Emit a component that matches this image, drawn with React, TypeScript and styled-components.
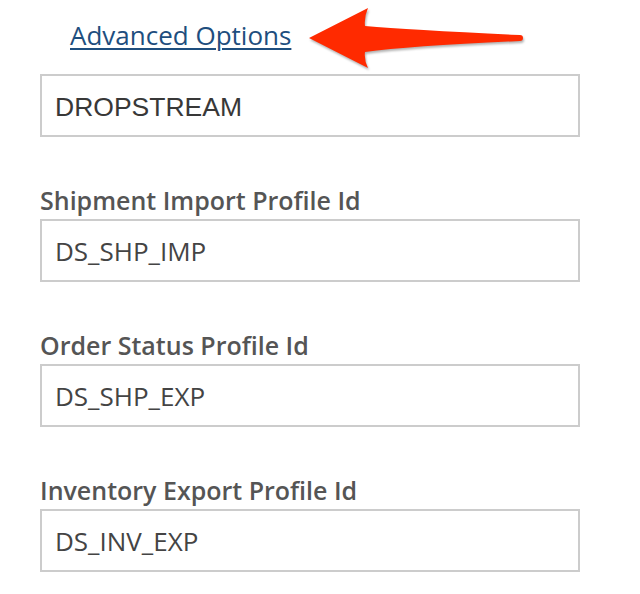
import React from "react";
import styled, { createGlobalStyle } from "styled-components";

const GlobalStyle = createGlobalStyle`
  html, body {
    margin: 0;
    padding: 0;
    background: #ffffff;
  }
  body {
    font-family: "Open Sans", "Liberation Sans", sans-serif;
  }
`;

interface Field {
  label?: string;
  value: string;
  legacy?: boolean;
}

const fields: Field[] = [
  { value: "DROPSTREAM", legacy: true },
  { label: "Shipment Import Profile Id", value: "DS_SHP_IMP" },
  { label: "Order Status Profile Id", value: "DS_SHP_EXP" },
  { label: "Inventory Export Profile Id", value: "DS_INV_EXP" },
];

export default function App() {
  return (
    <>
      <GlobalStyle />
      <StForm>
        <StHeader>
          <StLink href="#">Advanced Options</StLink>
          <CalloutArrow />
        </StHeader>
        {fields.map((field) => (
          <StFieldGroup key={field.value}>
            {field.label && <StLabel>{field.label}</StLabel>}
            <StInput value={field.value} readOnly $legacy={field.legacy} />
          </StFieldGroup>
        ))}
      </StForm>
    </>
  );
}

// red callout arrow pointing at the link
function CalloutArrow() {
  return (
    <StArrow width="240" height="80" viewBox="0 0 240 80">
      <path
        d="M9 38 L68 8 Q64 17 65 26 Q110 30 220 35 A3 3 0 0 1 220 41 Q110 46 65 52 Q64 60 68 68 Z"
        fill="#ff2a00"
      />
    </StArrow>
  );
}

const StForm = styled.div`
  display: flex;
  flex-direction: column;
  gap: 46px;
  width: 540px;
  padding: 0 0 0 40px;
`;

const StHeader = styled.div`
  position: relative;
  display: flex;
  align-items: flex-start;
  height: 74px;
  margin-bottom: -46px;
  padding-left: 30px;
`;

const StLink = styled.a`
  margin-top: 17px;
  color: #1e4e7e;
  font-size: 26px;
  line-height: normal;
  text-decoration: underline;
  text-decoration-thickness: 2px;
  text-underline-offset: 3px;
`;

const StArrow = styled.svg`
  position: absolute;
  left: 260px;
  top: 0;
  filter: drop-shadow(1px 2px 1px rgba(0, 0, 0, 0.3));
`;

const StFieldGroup = styled.div`
  display: flex;
  flex-direction: column;
  gap: 2px;
`;

const StLabel = styled.label`
  color: #555555;
  font-size: 25px;
  font-weight: 600;
  line-height: 34px;
`;

const StInput = styled.input<{ $legacy?: boolean }>`
  box-sizing: border-box;
  width: 540px;
  height: 63px;
  margin: 0;
  padding: ${(p) => (p.$legacy ? "3px 13px 0" : "0 13px")};
  border: 2px solid #cccccc;
  border-radius: 0;
  background: #ffffff;
  outline: none;
  color: ${(p) => (p.$legacy ? "#383838" : "#444444")};
  font-family: ${(p) =>
    p.$legacy ? '"Liberation Sans", Arial, sans-serif' : '"Open Sans", sans-serif'};
  font-size: ${(p) => (p.$legacy ? "26.5px" : "26px")};
`;
